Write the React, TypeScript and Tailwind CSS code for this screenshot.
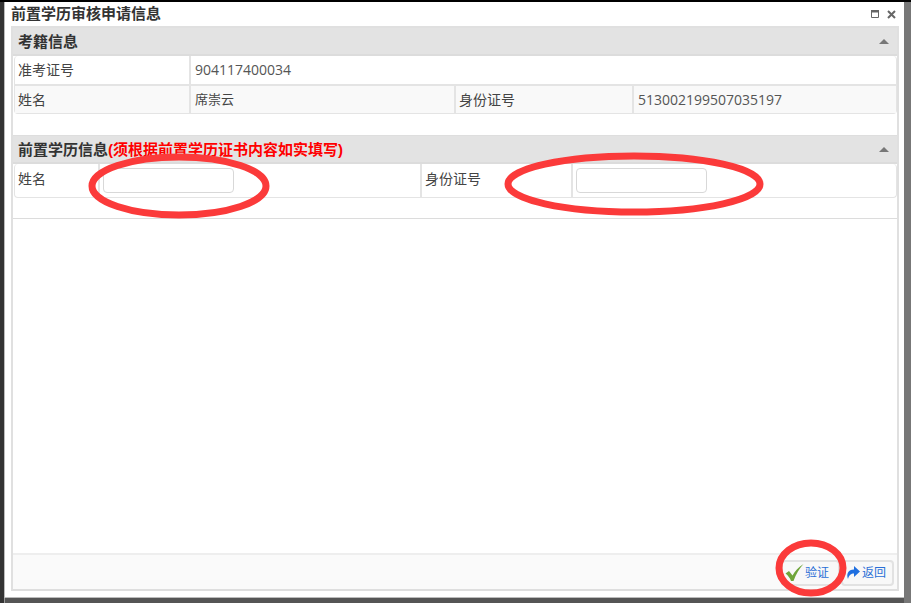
const font = "font-['Liberation_Sans','Noto_Sans_CJK_SC',sans-serif]";
const digits = "font-['Open_Sans',sans-serif] text-[14px] text-[#555]";

function SectionHeader({ children }: { children: React.ReactNode }) {
  return (
    <div className="flex h-[28px] items-center justify-between border-b-2 border-[#dcdcdc] bg-[#e3e3e3] pl-[5px] pr-[8px]">
      <span className="text-[15px] font-bold leading-none text-[#333]">{children}</span>
      <svg width="10" height="5" viewBox="0 0 10 5">
        <path d="M5 0 L10 5 L0 5 Z" fill="#777" />
      </svg>
    </div>
  );
}

function Ellipse({ className, rx, ry }: { className: string; rx: number; ry: number }) {
  return (
    <svg
      className={`pointer-events-none absolute ${className}`}
      width={rx * 2 + 8}
      height={ry * 2 + 8}
      viewBox={`0 0 ${rx * 2 + 8} ${ry * 2 + 8}`}
    >
      <ellipse cx={rx + 4} cy={ry + 4} rx={rx} ry={ry} fill="none" stroke="#fb3a3a" strokeWidth="7" />
    </svg>
  );
}

export default function App() {
  return (
    <div className={`relative flex h-[603px] w-[911px] overflow-hidden bg-[#555] pt-[2px] ${font}`}>
      {/* page behind the dialog */}
      <div className="w-[5px] shrink-0 border-r border-[#999] bg-[#333]" />
      <div className="flex h-[595px] w-[899px] shrink-0 flex-col bg-white pl-[6px] pr-[5px] shadow-[0_0_0_1px_#bbb]">
        <div className="flex h-[24px] shrink-0 items-center justify-between pb-[2px] pr-[3px]">
          <span className="text-[15px] font-bold leading-none text-[#333]">前置学历审核申请信息</span>
          <div className="flex items-center gap-[8px] pt-[2px]">
            <svg width="8" height="8" viewBox="0 0 8 8">
              <path d="M0.5 0.5 H7.5 V7.5 H0.5 Z" fill="none" stroke="#666" />
              <path d="M0 0 H8 V2.5 H0 Z" fill="#666" />
            </svg>
            <svg width="9" height="9" viewBox="0 0 9 9">
              <path d="M1 1 L8 8 M8 1 L1 8" stroke="#666" strokeWidth="2" />
            </svg>
          </div>
        </div>

        <div className="flex min-h-0 flex-1 flex-col border-2 border-[#e0e0e0] border-b-[#dedede]">
          <SectionHeader>考籍信息</SectionHeader>
          <div className="ml-[1px] h-[58px] rounded-[4px] border-x border-b border-[#e4e4e4] text-[14px] leading-none text-[#444]">
            <div className="flex h-[30px] items-center border-b-2 border-[#e4e4e4]">
              <div className="flex h-full w-[176px] items-center border-r-2 border-[#e4e4e4] pl-[3px]">准考证号</div>
              <div className={`pl-[4px] ${digits}`}>904117400034</div>
            </div>
            <div className="flex h-[27px] items-center bg-[#f9f9f9]">
              <div className="flex h-full w-[176px] items-center border-r-2 border-[#e4e4e4] pl-[3px]">姓名</div>
              <div className="flex h-full w-[265px] items-center border-r-2 border-[#e4e4e4] pl-[4px] text-[13px]">席崇云</div>
              <div className="flex h-full w-[178px] items-center border-r-2 border-[#e4e4e4] pl-[3px]">身份证号</div>
              <div className={`pl-[4px] ${digits}`}>513002199507035197</div>
            </div>
          </div>
          <div className="h-[21px] shrink-0" />

          <div className="border-t border-[#dedede]">
            <SectionHeader>
              前置学历信息<span className="text-[#f00]">(须根据前置学历证书内容如实填写)</span>
            </SectionHeader>
          </div>
          <div className="ml-[1px] flex h-[34px] items-stretch rounded-[4px] border-x border-b border-[#e4e4e4] text-[14px] text-[#444]">
            <div className="flex w-[85px] items-center border-r-2 border-[#e4e4e4] pb-[2px] pl-[3px]">姓名</div>
            <div className="flex w-[322px] items-center border-r-2 border-[#e4e4e4] pl-[3px]">
              <input className="h-[25px] w-[131px] rounded-[4px] border border-[#d8d8d8] bg-white" />
            </div>
            <div className="flex w-[151px] items-center border-r-2 border-[#e4e4e4] pb-[2px] pl-[3px]">身份证号</div>
            <div className="flex items-center pl-[3px]">
              <input className="h-[25px] w-[131px] rounded-[4px] border border-[#d8d8d8] bg-white" />
            </div>
          </div>
          <div className="h-[21px] shrink-0 border-b border-[#dcdcdc]" />
          <div className="flex-1" />

          <div className="flex h-[36px] shrink-0 items-center justify-end gap-[1px] border-t-2 border-[#eeeeee] bg-[#fafafa] pr-[3px] pt-[1px]">
            <button className="flex h-[26px] w-[59px] items-center gap-[1px] rounded-[4px] border-2 border-[#e2e2e2] bg-[#f8f8f8] pl-[2px] text-[12px] leading-none text-[#2a6fd6]">
              <svg width="19" height="19" viewBox="0 0 19 19">
                <path d="M0.5 10.5 L4 8 L7.5 12.5 C10 8 13.5 4 18.5 1 C14.5 5.5 11 11 8.5 18 L6 18 C5 15 3 12.5 0.5 10.5 Z" fill="#6fa53a" />
              </svg>
              验证
            </button>
            <button className="flex h-[26px] w-[53px] items-center gap-[2px] rounded-[4px] border-2 border-[#e2e2e2] bg-[#f8f8f8] pl-[2px] text-[12px] leading-none text-[#2a6fd6]">
              <svg width="15" height="15" viewBox="0 0 15 15">
                <path d="M9 1 L15 6.5 L9 12 V8.5 C6 8.5 4 10 3 14 C1 9.5 3 4.5 9 4.5 Z" fill="#1f6fe0" />
              </svg>
              返回
            </button>
          </div>
        </div>
        <div className="h-[6px] shrink-0" />
      </div>
      <div className="flex-1 bg-[#777]" />

      <div className="absolute left-0 top-0 h-[2px] w-full bg-black" />
      <Ellipse className="left-[88px] top-[153px]" rx={87} ry={29} />
      <Ellipse className="left-[504px] top-[152px]" rx={126} ry={28} />
      <Ellipse className="left-[775px] top-[539px]" rx={32} ry={25} />
    </div>
  );
}
